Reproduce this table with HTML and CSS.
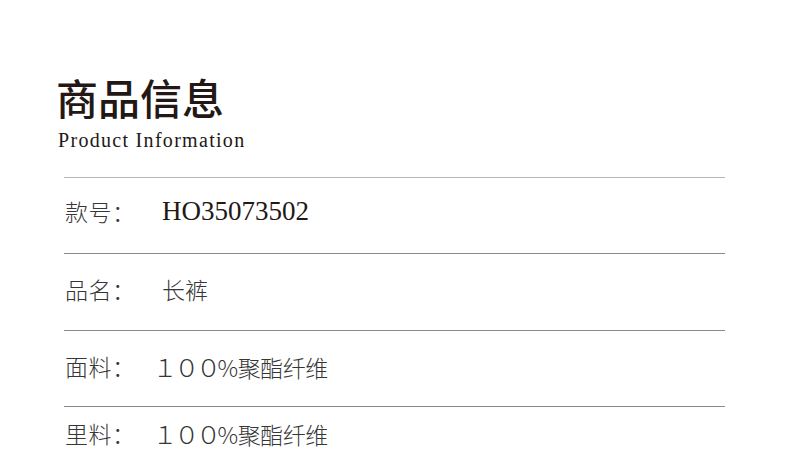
FILE: index.html
```html
<!DOCTYPE html>
<html lang="zh-CN">
<head>
<meta charset="utf-8">
<link rel="stylesheet" href="styles.css">
</head>
<body>
<div class="page">
  <header class="head">
    <h1 class="title">商品信息</h1>
    <p class="subtitle">Product Information</p>
  </header>
  <div class="table">
    <div class="row row-first"><span class="label">款号：</span><span class="value value-serif">HO35073502</span></div>
    <div class="row"><span class="label">品名：</span><span class="value">长裤</span></div>
    <div class="row"><span class="label">面料：</span><span class="value value-mix"><span class="num">１００</span>%聚酯纤维</span></div>
    <div class="row row-last"><span class="label">里料：</span><span class="value value-mix"><span class="num">１００</span>%聚酯纤维</span></div>
  </div>
</div>
</body>
</html>
```
FILE: styles.css
```css
html, body {
  margin: 0;
  padding: 0;
  background: #ffffff;
}
.page {
  width: 790px;
  height: 461px;
  overflow: hidden;
  padding-top: 73px;
  box-sizing: border-box;
}
.head {
  padding-left: 56px;
}
.title {
  margin: 0;
  font-family: "Noto Sans CJK SC", sans-serif;
  font-weight: 500;
  font-size: 42px;
  line-height: 48px;
  color: #231815;
}
.subtitle {
  margin: 7px 0 0 2px;
  font-family: "Liberation Serif", serif;
  font-size: 20px;
  line-height: 24px;
  letter-spacing: 1.3px;
  color: #231815;
}
.table {
  margin: 25px 65px 0 64px;
}
.row {
  display: flex;
  align-items: flex-start;
  box-sizing: border-box;
  height: 76.33px;
  padding-top: 20px;
  border-top: 1px solid #8a8a8a;
  color: #363636;
}
.row-first {
  padding-top: 18px;
  border-top-color: #b5b5b5;
}
.row-last {
  padding-top: 11px;
}
.label {
  width: 97px;
  padding-left: 1px;
  font-family: "Noto Sans CJK SC", sans-serif;
  font-weight: 300;
  font-size: 23px;
  line-height: 30px;
  letter-spacing: 0.5px;
}
.value {
  font-family: "Noto Sans CJK SC", sans-serif;
  font-weight: 300;
  font-size: 23px;
  line-height: 30px;
}
.value-serif {
  font-family: "Liberation Serif", serif;
  font-weight: 400;
  font-size: 27px;
  color: #231815;
}
.value-mix {
  margin-left: -9.5px;
  letter-spacing: -0.5px;
}
.num {
  font-size: 25px;
  letter-spacing: -3.3px;
}
```
